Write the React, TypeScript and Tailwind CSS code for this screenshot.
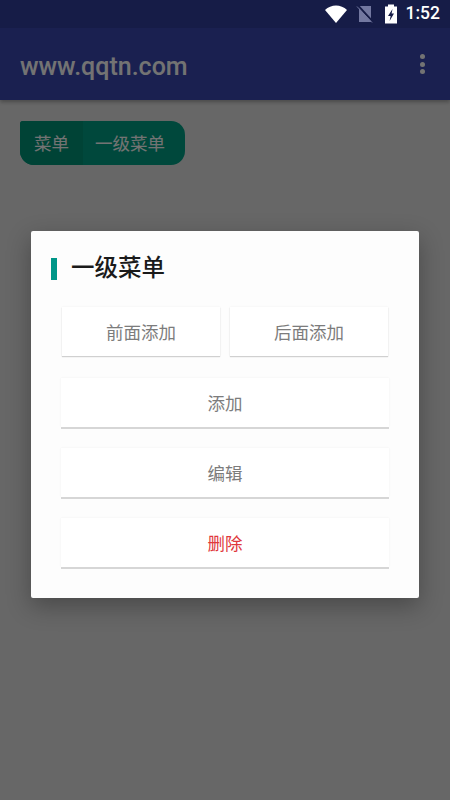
const cjk = "font-['Roboto','Noto_Sans_CJK_SC','Noto_Sans_CJK_JP',sans-serif]";

function Btn({ label, red, thin }: { label: string; red?: boolean; thin?: boolean }) {
  return (
    <button
      className={`h-[49px] w-full bg-white pt-[3px] text-[17.5px] ${thin ? "shadow-[0_1px_1px_#d0d0d0,0_0_2px_rgba(0,0,0,0.06)]" : "shadow-[0_2px_0_#d6d6d6,0_0_2px_rgba(0,0,0,0.06)]"} ${red ? "text-[#e0383c]" : "text-[#7c7c7c]"}`}
    >
      {label}
    </button>
  );
}

export default function App() {
  return (
    <div className={`relative h-[800px] w-[450px] overflow-hidden bg-[#e5e5e5] ${cjk}`}>
      <div className="relative z-10 flex h-[28px] items-center justify-end bg-[#161c47] pr-[10px]">
        <svg width="24" height="20" viewBox="0 0 24 20" className="mr-[8px]">
          <path d="M1 6C4 3 8 1.5 12 1.5S20 3 23 6L12 19z" fill="#fff" />
        </svg>
        <svg width="18" height="18" viewBox="0 0 18 18" className="mr-[10px]">
          <path d="M3 1h12v16H3z" fill="#7378a0" />
          <path d="M2 0.5l15 16.5" stroke="#161c47" strokeWidth="2" />
          <path d="M1 1.5l15 16" stroke="#7378a0" strokeWidth="1" />
        </svg>
        <svg width="14" height="20" viewBox="0 0 14 20" className="mr-[8px]">
          <path d="M4 0.5h6v2h3v17H1v-17h3z" fill="#fff" />
          <path d="M8.5 5L4 12h2.6L5.6 17 10 9.6H7.6z" fill="#161c47" />
        </svg>
        <span className="text-[17.5px] font-medium leading-none text-white">1:52</span>
      </div>
      <header className="flex h-[72px] items-center justify-between bg-[#3A47B2] pl-[20px] pr-[25px] pt-[6px] shadow-[0_2px_4px_rgba(0,0,0,0.3)]">
        <span className="text-[25px] font-medium text-white">www.qqtn.com</span>
        <div className="-mt-[6px] flex flex-col gap-[2.5px]">
          <span className="size-[5px] rounded-full bg-white" />
          <span className="size-[5px] rounded-full bg-white" />
          <span className="size-[5px] rounded-full bg-white" />
        </div>
      </header>
      <div className="px-[20px] pt-[21px]">
        <div className="flex h-[44px] w-[165px] overflow-hidden rounded-bl-[14px] rounded-tr-[14px] rounded-br-[14px] rounded-tl-[3px] bg-[#00a085] text-[17.5px] text-white">
          <span className="flex w-[63px] items-center justify-center bg-[#009478] pt-[2px]">菜单</span>
          <span className="flex flex-1 items-center justify-center pr-[8px] pt-[2px]">一级菜单</span>
        </div>
      </div>

      <div className="absolute inset-0 bg-black/55">
        <div className="absolute left-[31px] top-[231px] h-[367px] w-[388px] rounded-[2px] bg-[#fdfdfd] shadow-[0_8px_24px_rgba(0,0,0,0.3)]">
          <div className="flex h-[76px] items-center pl-[20px]">
            <span className="mr-[14px] h-[22px] w-[6px] bg-[#009688]" />
            <span className="-mt-[1px] text-[23.5px] font-medium text-[#1a1a1a]">一级菜单</span>
          </div>
          <div className="flex flex-col gap-[21px] px-[30px]">
            <div className="mb-px flex gap-[10px] px-px">
              <div className="flex-1"><Btn label="前面添加" thin /></div>
              <div className="flex-1"><Btn label="后面添加" thin /></div>
            </div>
            <Btn label="添加" />
            <Btn label="编辑" />
            <Btn label="删除" red />
          </div>
        </div>
      </div>
    </div>
  );
}
